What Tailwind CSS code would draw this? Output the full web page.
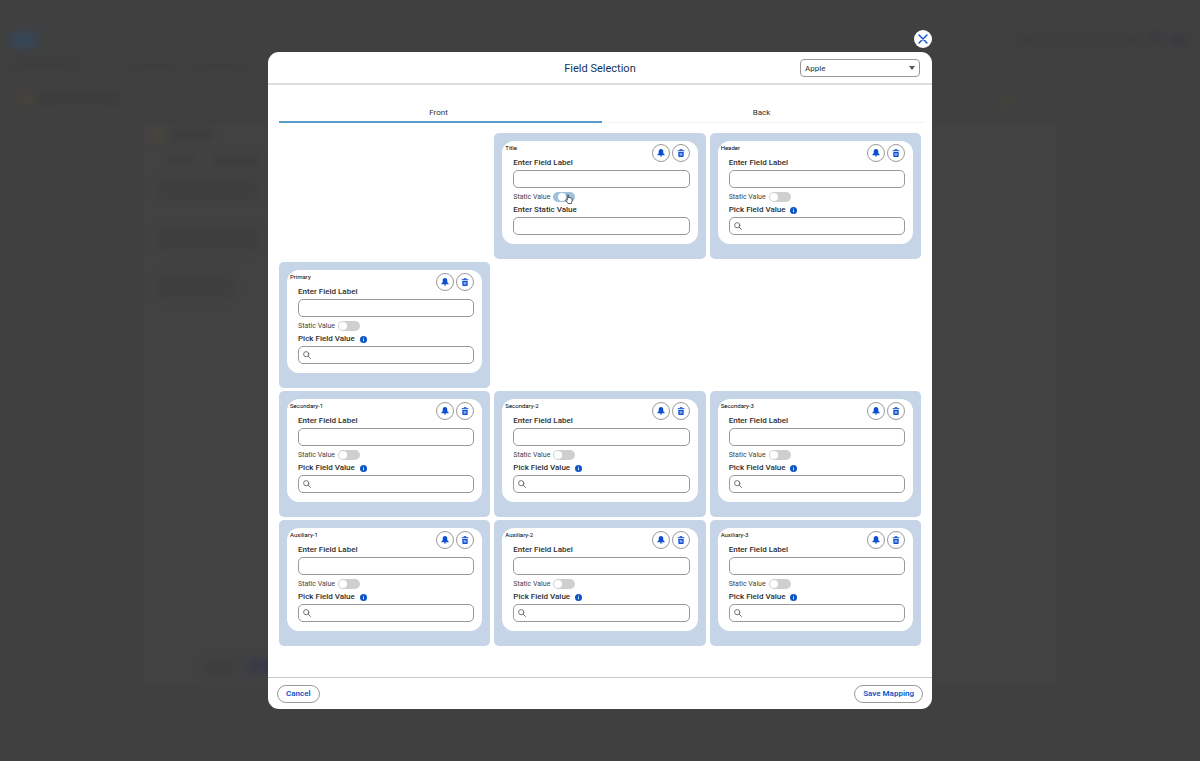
<!DOCTYPE html>
<html lang="en">
<head>
    <meta charset="UTF-8">
    <meta name="viewport" content="width=device-width, initial-scale=1.0">
    <title>Field Selection</title>
    <script src="https://cdn.jsdelivr.net/npm/@tailwindcss/browser@4"></script>
</head>
<body class="relative min-h-screen overflow-x-hidden bg-[#404040] font-['Roboto',sans-serif] text-[#2e2e2e]">

    <!-- dimmed page behind the modal -->
    <div class="absolute inset-0 overflow-hidden" aria-hidden="true">
        <div class="absolute top-[124px] left-[142px] w-[916px] h-[562px] bg-[#424242] blur-[2px]"></div>
        <div class="absolute top-[32px] left-[10px] w-7 h-4 rounded-full bg-[#34465a] blur-[5px]"></div>
        <div class="absolute top-[62px] left-[12px] w-[68px] h-2 bg-[#3c3c3c] blur-[4px]"></div>
        <div class="absolute top-[62px] left-[130px] w-[50px] h-2 bg-[#3d3d3d] blur-[4px]"></div>
        <div class="absolute top-[62px] left-[195px] w-[50px] h-2 bg-[#3d3d3d] blur-[4px]"></div>
        <div class="absolute top-[92px] left-[18px] w-4 h-3 bg-[#48433a] blur-[4px]"></div>
        <div class="absolute top-[95px] left-[40px] w-[80px] h-2 bg-[#3b3b3b] blur-[4px]"></div>
        <div class="absolute top-[129px] left-[152px] w-3 h-3 bg-[#4a453a] blur-[4px]"></div>
        <div class="absolute top-[131px] left-[172px] w-[40px] h-2 bg-[#3b3b3b] blur-[4px]"></div>
        <div class="absolute top-[155px] left-[168px] w-[25px] h-2 bg-[#3c3c3c] blur-[4px]"></div>
        <div class="absolute top-[155px] left-[215px] w-[42px] h-3 bg-[#3d3d3d] blur-[4px]"></div>
        <div class="absolute top-[180px] left-[158px] w-[100px] h-5 bg-[#3e3e3e] blur-[4px]"></div>
        <div class="absolute top-[229px] left-[158px] w-[100px] h-5 bg-[#3e3e3e] blur-[4px]"></div>
        <div class="absolute top-[277px] left-[158px] w-[75px] h-5 bg-[#3e3e3e] blur-[4px]"></div>
        <div class="absolute top-[36px] left-[1020px] w-[120px] h-2 bg-[#3b3b3b] blur-[5px]"></div>
        <div class="absolute top-[32px] left-[1148px] w-3 h-3 rounded-full bg-[#3b3640] blur-[4px]"></div>
        <div class="absolute top-[34px] left-[1170px] w-4 h-3 rounded-full bg-[#383a44] blur-[4px]"></div>
        <div class="absolute top-[95px] left-[1000px] w-[12px] h-3 bg-[#45423a] blur-[4px]"></div>
        <div class="absolute top-[659px] left-[204px] w-[34px] h-4 rounded-full bg-[#3e3e3e] blur-[4px]"></div>
        <div class="absolute top-[658px] left-[246px] w-[40px] h-4 rounded-full bg-[#383b48] blur-[4px]"></div>
    </div>

    <div class="relative mx-auto w-full max-w-[664px] pt-[30px]">
        <div class="flex justify-end">
            <button type="button" aria-label="Close" class="flex size-[18px] items-center justify-center rounded-full bg-white">
                <svg class="size-[10px]" viewBox="0 0 10 10" fill="none" stroke="#0b4fd0" stroke-width="1.4" stroke-linecap="round"><path d="M1 1l8 8M9 1l-8 8"/></svg>
            </button>
        </div>

        <section role="dialog" aria-labelledby="modalTitle" class="mt-1 overflow-hidden rounded-[11px] bg-white">
            <header class="grid h-[33px] grid-cols-[1fr_auto_1fr] items-center border-b-2 border-[#dddddd]">
                <h1 id="modalTitle" class="col-start-2 pt-[2px] text-[11px] leading-4 text-[#16325c]">Field Selection</h1>
                <div class="relative mr-3 w-[120px] justify-self-end">
                    <select aria-label="Wallet" class="block h-[18px] w-full appearance-none rounded-[4px] border border-[#999999] bg-white pt-px pl-1 text-[8px] leading-4">
                        <option>Apple</option>
                        <option>Google</option>
                    </select>
                    <svg class="pointer-events-none absolute top-[7px] right-[5px] h-1 w-[6px]" viewBox="0 0 6 4" fill="#555"><path d="M0 0h6L3 4z"/></svg>
                </div>
            </header>

            <div class="px-[11px] pt-[15px] pb-[31px]">
                <div role="tablist" class="-mr-1 grid grid-cols-2 text-[8px] leading-3">
                    <button type="button" role="tab" aria-selected="true" class="border-b-2 border-[#5a9bcb] pt-[7px] pr-1 pb-[2px]">Front</button>
                    <button type="button" role="tab" aria-selected="false" class="border-b border-[#f3f3f3] pt-[7px] pr-1 pb-[3px]">Back</button>
                </div>
                <div id="cards" class="mt-[10px] grid grid-cols-3 gap-x-1 gap-y-[3px]"></div>
            </div>

            <footer class="flex h-8 items-center justify-between border-t border-[#c9c9c9] px-[9px] text-[8px] font-semibold text-[#0b54c6]">
                <button type="button" class="h-[18px] rounded-full border border-[#999999] px-2">Cancel</button>
                <button type="button" class="h-[18px] rounded-full border border-[#999999] px-2">Save Mapping</button>
            </footer>
        </section>
    </div>

    <script>
        // null leaves an empty place in the grid
        const fields = [
            null, 'Title', 'Header',
            'Primary', null, null,
            'Secondary-1', 'Secondary-2', 'Secondary-3',
            'Auxiliary-1', 'Auxiliary-2', 'Auxiliary-3'
        ];

        const cursor = `
            <svg class="pointer-events-none absolute top-[2px] left-3 h-[10px] w-2" viewBox="0 0 8 10" fill="#fff" stroke="#333" stroke-width=".8" stroke-linejoin="round"><path d="M2.3 5.8V1.2q.6-1 1.2 0v2.6l.3-.3q.6-.3 1 .3.7-.3 1.1.4.9-.2 1.2.6v2.1L6.3 9.5H3.1L.7 6.4q.2-1 1.6-.2z"/></svg>`;

        const info = `
            <svg class="size-[7px]" viewBox="0 0 8 8"><circle cx="4" cy="4" r="4" fill="#0b54c6"/><path d="M4 3.6v2.4M4 1.9v.9" stroke="#fff" stroke-width="1"/></svg>`;

        const search = `
            <svg class="pointer-events-none absolute top-[5px] left-[5px] size-2" viewBox="0 0 8 8" fill="none" stroke="#666" stroke-width=".9" stroke-linecap="round"><circle cx="3.2" cy="3.2" r="2.6"/><path d="M5.2 5.2l2.3 2.3"/></svg>`;

        function card(name) {
            if (!name) return '<div></div>';
            const isStatic = name === 'Title';
            return `
            <article class="rounded-[5px] bg-[#c5d5e7] px-2 pt-2 pb-[15px]">
                <div class="relative h-[103px] rounded-[12px] bg-white pt-4 pr-2 pl-[11px] text-[8px] leading-3">
                    <h2 class="absolute top-[3px] left-[3px] text-[6px] leading-2 text-black">${name}</h2>
                    <div class="absolute top-[3px] right-2 flex gap-[2px]">
                        <button type="button" aria-label="Notifications" class="flex size-[18px] items-center justify-center rounded-full border border-[#999999] bg-white">
                            <svg class="size-2" viewBox="0 0 8 8" fill="#0b4fd0"><path d="M4 0C2.5 0 1.7 1.1 1.7 2.4v1.8L.4 5.4v.9h7.2v-.9L6.3 4.2V2.4C6.3 1.1 5.5 0 4 0zM3 6.6h2Q4.8 7.8 4 7.8T3 6.6z"/></svg>
                        </button>
                        <button type="button" aria-label="Delete" class="flex size-[18px] items-center justify-center rounded-full border border-[#999999] bg-white">
                            <svg class="size-2" viewBox="0 0 8 8" fill="#0b4fd0"><path d="M.7 1.3h2V.7Q2.7 0 3.4 0h1.2q.7 0 .7.7v.6h2v1H.7zM3.4 1.3h1.2V.7H3.4z" fill-rule="evenodd"/><path d="M1.3 2.9h5.4v4.2q0 .9-.9.9H2.2q-.9 0-.9-.9zM2.8 4v2.8h.7V4zM4.5 4v2.8h.7V4z" fill-rule="evenodd"/></svg>
                        </button>
                    </div>
                    <label for="${name}-label" class="block font-medium">Enter Field Label</label>
                    <input id="${name}-label" type="text" class="mt-px block h-[18px] w-full rounded-[5px] border border-[#999999] px-1">
                    <div class="mt-[3px] flex items-center gap-[3px]">
                        <label for="${name}-static" class="text-[7px] text-[#444444]">Static Value</label>
                        <span class="relative flex">
                            <input id="${name}-static" type="checkbox" class="h-[10px] w-[22px] appearance-none rounded-full before:block before:size-2 before:translate-y-px before:rounded-full before:bg-white ${isStatic ? 'bg-[#9fc0dd] before:ml-[5px]' : 'bg-[#cfcfcf] before:ml-px'}">
                            ${isStatic ? cursor : ''}
                        </span>
                    </div>
                    <label for="${name}-value" class="mt-px flex items-center gap-[5px] font-medium">${isStatic ? 'Enter Static Value' : 'Pick Field Value' + info}</label>
                    <div class="relative mt-px">
                        <input id="${name}-value" type="text" class="block h-[18px] w-full rounded-[5px] border border-[#999999] ${isStatic ? 'px-1' : 'pr-1 pl-4'}">
                        ${isStatic ? '' : search}
                    </div>
                </div>
            </article>`;
        }

        document.getElementById('cards').innerHTML = fields.map(card).join('');
    </script>
</body>
</html>
